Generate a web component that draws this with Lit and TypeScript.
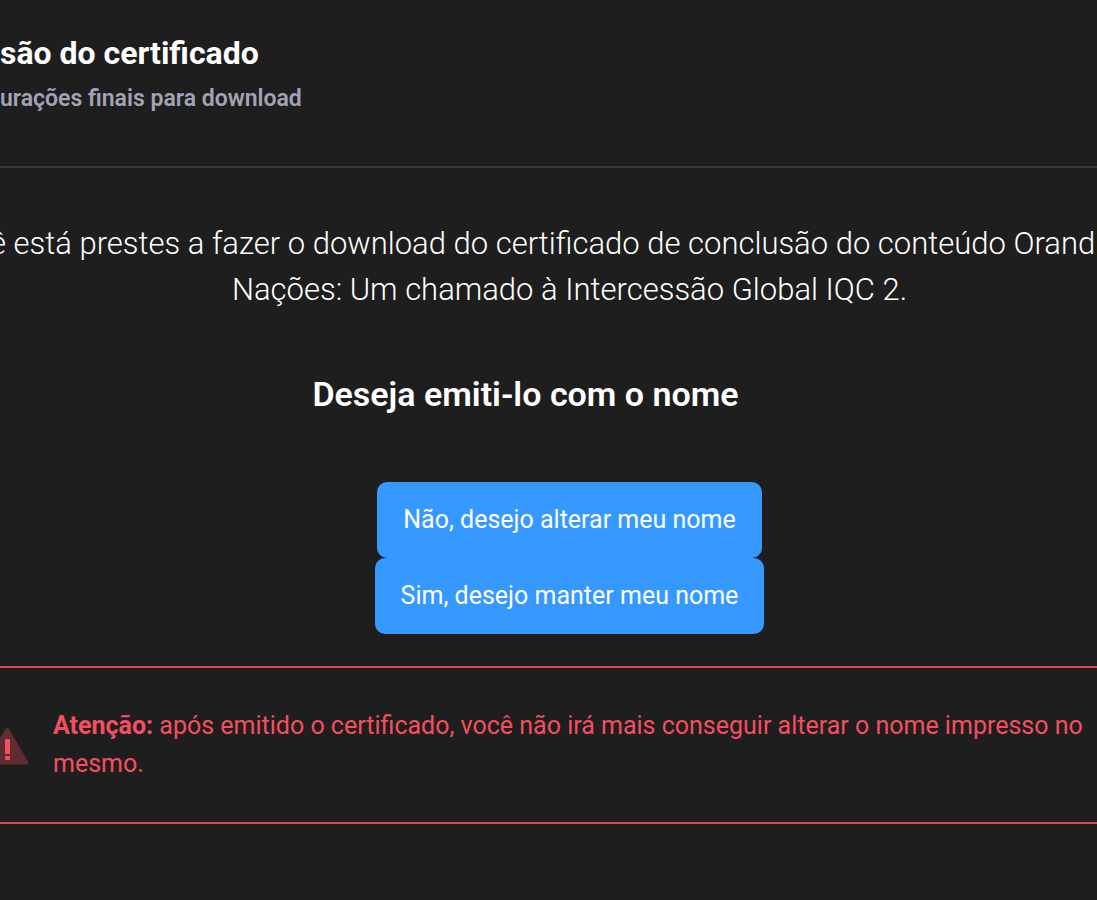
import { LitElement, html, css } from "lit";
import { customElement } from "lit/decorators.js";

@customElement("app-root")
export class AppRoot extends LitElement {
  static styles = css`
    :host {
      display: block;
      min-height: 100vh;
      overflow: hidden;
      background: #1e1e1e;
      color: #fff;
      font-family: Roboto, "Liberation Sans", sans-serif;
    }
    * {
      box-sizing: border-box;
    }
    /* The dialog is wider than the window and bleeds off both sides. */
    .dialog {
      margin: 0 -52px 0 -10px;
    }
    .header {
      padding: 31px 10px 51px;
      border-bottom: 2px solid #393939;
    }
    h2,
    h3,
    p {
      margin: 0;
    }
    .title {
      font-size: 32px;
      line-height: 44px;
      font-weight: 700;
    }
    .subtitle {
      margin-top: 8px;
      font-size: 23px;
      line-height: 32px;
      font-weight: 600;
      color: #a3a3b5;
    }
    .body {
      padding: 53px 0 32px;
      display: flex;
      flex-direction: column;
      align-items: center;
      text-align: center;
    }
    .message {
      width: 100%;
      font-size: 31px;
      line-height: 46px;
      font-weight: 350;
      white-space: nowrap;
    }
    .lead {
      display: block;
      text-align: left;
    }
    .question {
      margin-top: 57px;
      font-size: 34px;
      line-height: 48px;
      font-weight: 600;
    }
    .name {
      display: inline-block;
      width: 88px;
    }
    .actions {
      margin-top: 64px;
      display: flex;
      flex-direction: column;
      align-items: center;
    }
    .button {
      border: 0;
      border-radius: 10px;
      padding: 19px 26px;
      background: #3699ff;
      color: #fff;
      font: inherit;
      font-size: 25px;
      line-height: 38px;
      cursor: pointer;
    }
    .alert {
      display: flex;
      align-items: center;
      gap: 24px;
      padding: 39px 40px 39px 0;
      border: solid #d9475a;
      border-width: 2px 0;
      color: #f64e60;
      font-size: 25px;
      line-height: 38px;
    }
    .icon {
      flex: none;
      width: 39px;
      height: 38px;
      margin-top: 2px;
    }
  `;

  render() {
    return html`
      <main class="dialog">
        <header class="header">
          <h2 class="title">são do certificado</h2>
          <p class="subtitle">urações finais para download</p>
        </header>
        <section class="body">
          <p class="message">
            <span class="lead"
              >ê está prestes a fazer o download do certificado de conclusão do conteúdo Orand</span
            >
            Nações: Um chamado à Intercessão Global IQC 2.
          </p>
          <h3 class="question">Deseja emiti-lo com o nome<span class="name"></span></h3>
          <div class="actions">
            <button class="button" type="button">Não, desejo alterar meu nome</button>
            <button class="button" type="button">Sim, desejo manter meu nome</button>
          </div>
        </section>
        <div class="alert" role="alert">
          <svg class="icon" viewBox="0 0 39 38" aria-hidden="true">
            <path
              d="M15.6 1.8Q17.2-.8 18.9 1.8L38.2 34.6Q40 37.6 36.8 37.6H-2.6Q-5.8 37.6-4 34.6Z"
              fill="#f64e60"
              opacity=".3"
            />
            <rect x="15" y="12" width="5" height="15" rx="1" fill="#f64e60" />
            <rect x="15" y="29" width="5" height="4" rx="1" fill="#f64e60" />
          </svg>
          <p>
            <strong>Atenção:</strong> após emitido o certificado, você não irá mais conseguir alterar
            o nome impresso no<br />mesmo.
          </p>
        </div>
      </main>
    `;
  }
}
